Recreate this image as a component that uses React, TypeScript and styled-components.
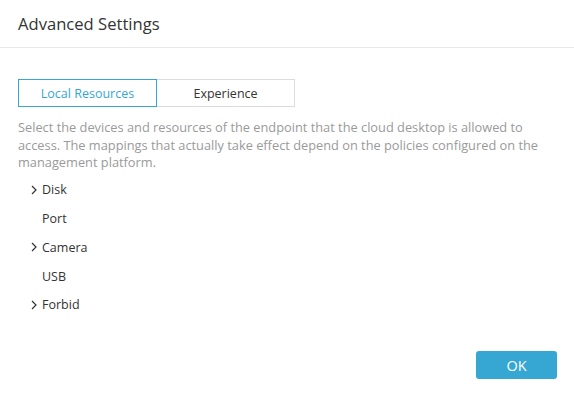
import React, { useState } from "react";
import styled, { createGlobalStyle } from "styled-components";

const Global = createGlobalStyle`
  html, body { margin: 0; padding: 0; background: #fff; }
  body { font-family: "Open Sans", "Noto Sans", sans-serif; }
  * { box-sizing: border-box; }
`;

const Dialog = styled.div`
  width: 574px;
  height: 395px;
  display: flex;
  flex-direction: column;
  background: #fff;
`;

const Header = styled.div`
  height: 48px;
  padding: 0 18px;
  display: flex;
  align-items: center;
  border-bottom: 1px solid #e8e8e8;
`;

const Title = styled.h1`
  margin: 0;
  font-size: 16.6px;
  font-weight: 400;
  color: #333;
`;

const Body = styled.div`
  flex: 1;
  padding: 31px 18px 0;
  display: flex;
  flex-direction: column;
`;

const Tabs = styled.div`
  display: flex;
`;

const Tab = styled.button<{ $active?: boolean }>`
  width: 139px;
  height: 28px;
  margin-left: ${(p) => (p.$active ? "0" : "-1px")};
  border: 1px solid ${(p) => (p.$active ? "#36a7d3" : "#dcdcdc")};
  background: #fff;
  color: ${(p) => (p.$active ? "#36a7d3" : "#333")};
  font-family: inherit;
  font-size: 12.5px;
  padding: 0;
  cursor: pointer;
  position: relative;
  z-index: ${(p) => (p.$active ? 1 : 0)};
`;

const Description = styled.p`
  margin: 12px 0 0;
  font-size: 12.8px;
  line-height: 17.5px;
  color: #9a9a9a;
`;

const List = styled.div`
  margin-top: 4px;
  display: flex;
  flex-direction: column;
`;

const Item = styled.div`
  height: 28.75px;
  display: flex;
  align-items: center;
  padding-left: 13px;
  font-size: 12.5px;
  color: #333;
`;

const Chevron = styled.span`
  width: 11px;
  display: inline-flex;
  align-items: center;
`;

const Footer = styled.div`
  padding: 0 17px 16px 0;
  display: flex;
  justify-content: flex-end;
`;

const OkButton = styled.button`
  width: 81px;
  height: 28px;
  border: none;
  border-radius: 3px;
  background: #36a7d3;
  color: #fff;
  font-family: inherit;
  font-size: 14.5px;
  cursor: pointer;
`;

const ChevronIcon = () => (
  <svg width="6" height="10" viewBox="0 0 6 10">
    <path d="M1 1 L5 5 L1 9" fill="none" stroke="#333" strokeWidth="1.2" />
  </svg>
);

const items = [
  { name: "Disk", expandable: true },
  { name: "Port", expandable: false },
  { name: "Camera", expandable: true },
  { name: "USB", expandable: false },
  { name: "Forbid", expandable: true },
];

export default function App() {
  const [tab, setTab] = useState(0);
  return (
    <>
      <Global />
      <Dialog>
        <Header>
          <Title>Advanced Settings</Title>
        </Header>
        <Body>
          <Tabs>
            <Tab $active={tab === 0} onClick={() => setTab(0)}>Local Resources</Tab>
            <Tab $active={tab === 1} onClick={() => setTab(1)}>Experience</Tab>
          </Tabs>
          <Description>
            Select the devices and resources of the endpoint that the cloud desktop is allowed to
            access. The mappings that actually take effect depend on the policies configured on the
            management platform.
          </Description>
          <List>
            {items.map((it) => (
              <Item key={it.name}>
                <Chevron>{it.expandable && <ChevronIcon />}</Chevron>
                {it.name}
              </Item>
            ))}
          </List>
        </Body>
        <Footer>
          <OkButton>OK</OkButton>
        </Footer>
      </Dialog>
    </>
  );
}
